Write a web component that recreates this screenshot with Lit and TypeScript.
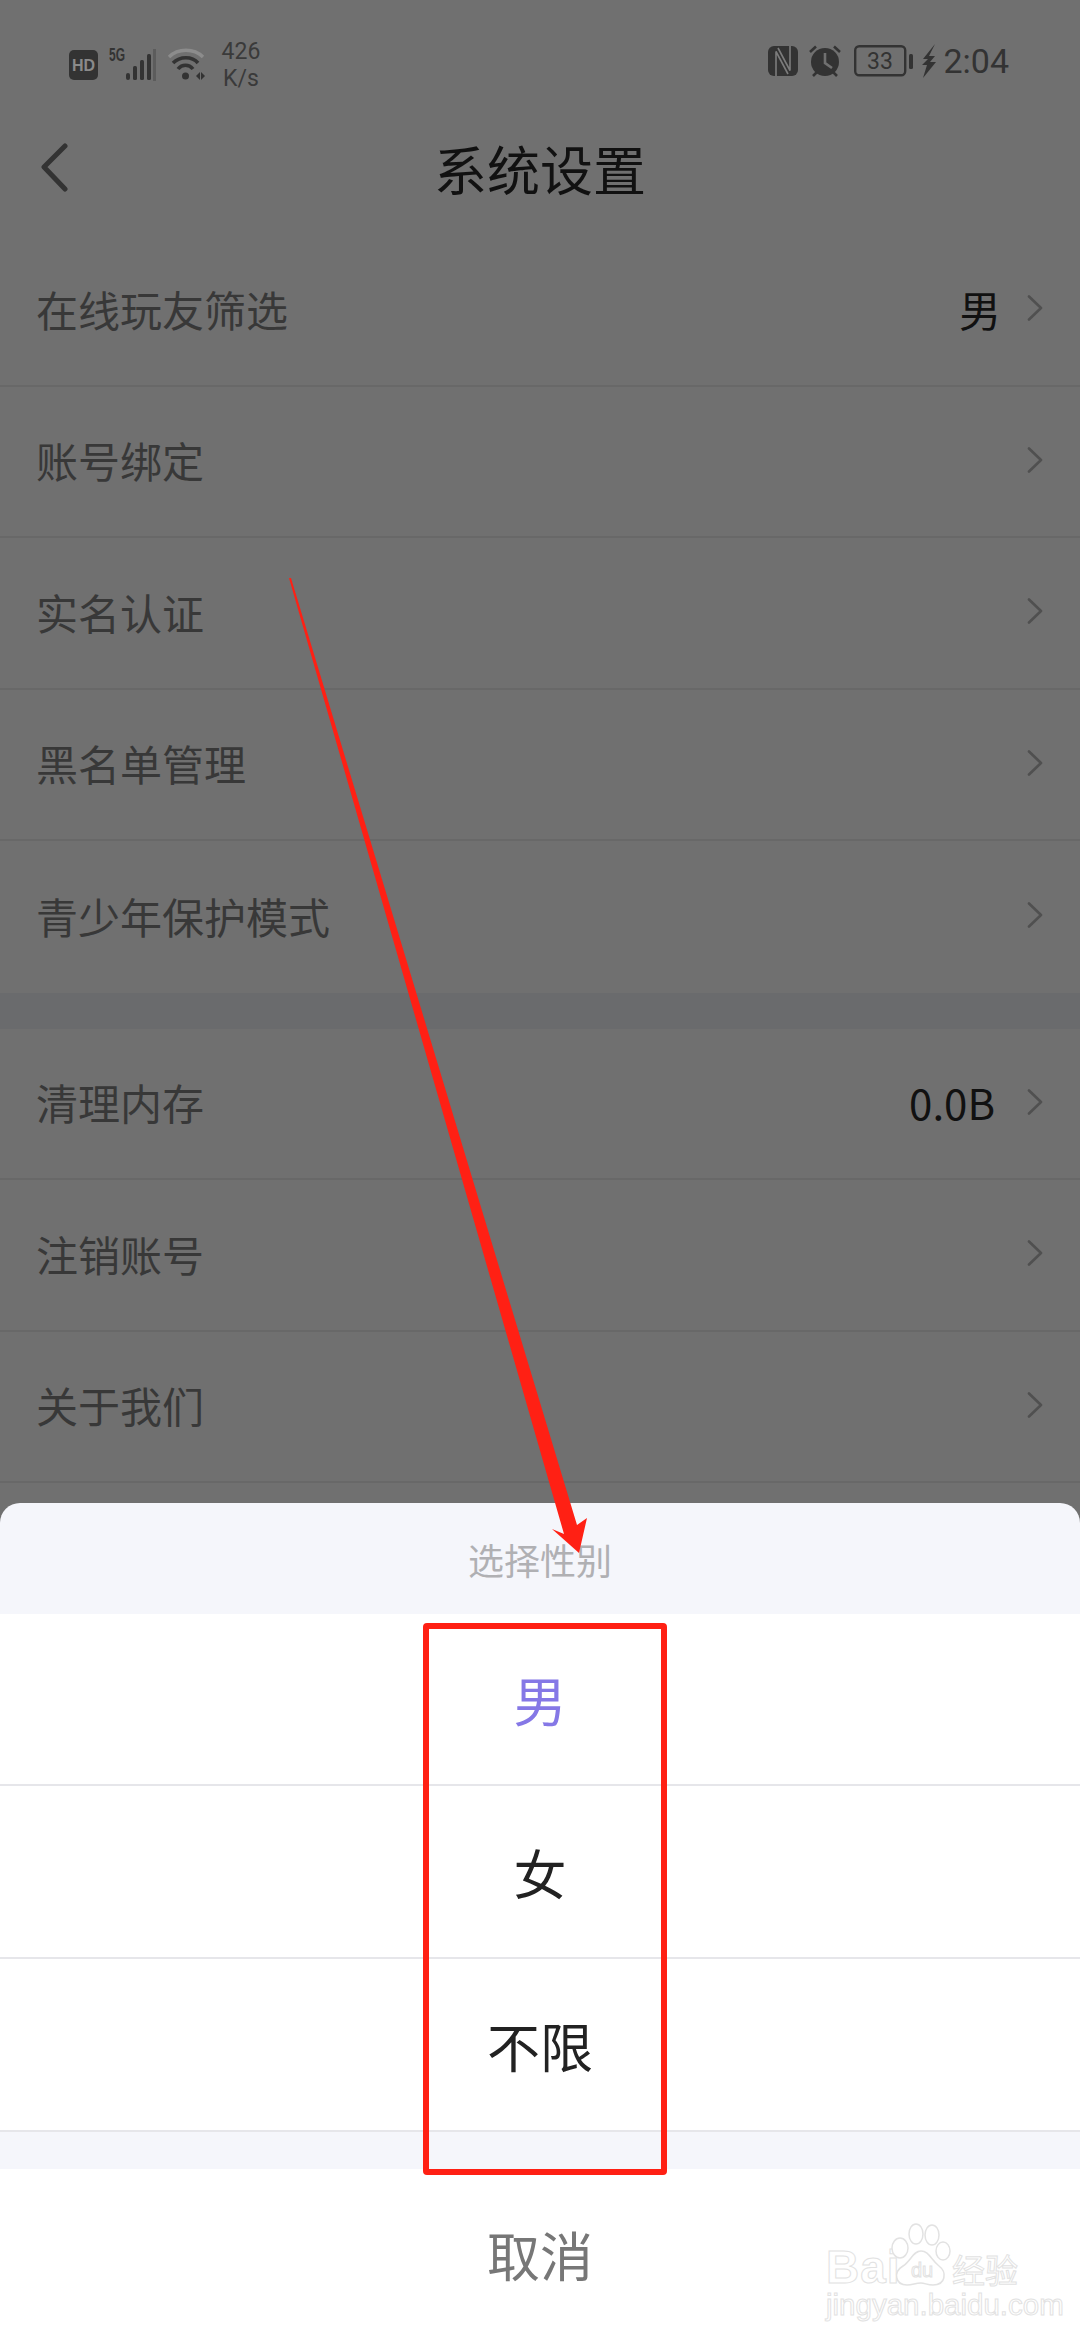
import { LitElement, html, css } from "lit";
import { customElement } from "lit/decorators.js";

const chevron = html`<svg class="chev" viewBox="0 0 16 26"><path d="M2 1.5 14 13 2 24.5" fill="none" stroke="#505050" stroke-width="2.6" stroke-linecap="round" stroke-linejoin="round"/></svg>`;

const topRows: [string, string?][] = [
  ["在线玩友筛选", "男"],
  ["账号绑定"],
  ["实名认证"],
  ["黑名单管理"],
  ["青少年保护模式"],
];
const bottomRows: [string, string?][] = [
  ["清理内存", "0.0B"],
  ["注销账号"],
  ["关于我们"],
];

@customElement("app-root")
export class AppRoot extends LitElement {
  static styles = css`
    :host {
      display: block;
      width: 1080px;
      height: 2340px;
      position: relative;
      overflow: hidden;
      background: #707070;
      font-family: "Noto Sans CJK SC", "Noto Sans", sans-serif;
      color: #111;
    }
    .status {
      height: 119px;
      display: flex;
      align-items: flex-start;
      justify-content: space-between;
      padding: 38px 71px 0 69px;
      box-sizing: border-box;
      color: #333;
    }
    .st-left, .st-right { display: flex; align-items: center; }
    .st-left { gap: 11px; }
    .st-right { height: 44px; margin-top: 1px; }
    .speed {
      font: 23px/27px Roboto, sans-serif;
      text-align: center;
      color: #3a3a3a;
      margin-left: 5px;
      width: 40px;
    }
    .clock {
      font: 34px/44px Roboto, sans-serif;
      color: #333;
      margin-left: 7px;
    }
    .nav {
      height: 116px;
      padding-bottom: 18px;
      box-sizing: border-box;
      position: relative;
      display: flex;
      align-items: center;
      justify-content: center;
      font-size: 53px;
      line-height: 60px;
      color: #111;
    }
    .back { position: absolute; left: 41px; top: 24px; width: 28px; height: 50px; }
    .group { display: flex; flex-direction: column; }
    .row {
      height: 151.5px;
      box-sizing: border-box;
      border-bottom: 2px solid #686868;
      display: flex;
      align-items: center;
      padding: 0 37px 3px 36px;
      font-size: 42px;
      color: #383838;
    }
    .row.last { border-bottom: none; }
    .label { flex: 1; }
    .value { color: #111; margin-right: 26px; }
    .value.num { margin-right: 32px; }
    .chev { width: 16px; height: 26px; flex: none; }
    .gap { height: 36px; background: #6a6b6d; }

    .sheet {
      position: absolute;
      left: 0;
      right: 0;
      top: 1503px;
      bottom: 0;
      display: flex;
      flex-direction: column;
      background: #f5f6fb;
      border-radius: 20px 20px 0 0;
      overflow: hidden;
    }
    .sheet-title {
      height: 111px;
      display: flex;
      align-items: center;
      justify-content: center;
      font-size: 36px;
      color: #b0b0b3;
    }
    .opt {
      height: 173px;
      box-sizing: border-box;
      background: #fff;
      border-bottom: 2px solid #e6e6ea;
      display: flex;
      align-items: center;
      justify-content: center;
      font-size: 53px;
      color: #222;
    }
    .opt.sel { color: #8578e6; height: 172px; }
    .sheet-gap { height: 37px; }
    .cancel {
      flex: 1;
      background: #fff;
      display: flex;
      align-items: center;
      justify-content: center;
      font-size: 53px;
      color: #777;
      padding-bottom: 2px;
    }

    .redbox {
      position: absolute;
      left: 423px;
      top: 1623px;
      width: 244px;
      height: 552px;
      box-sizing: border-box;
      border: 6px solid #ff2014;
      border-radius: 4px;
    }
    .arrow { position: absolute; left: 0; top: 0; width: 1080px; height: 2340px; pointer-events: none; }

    .wm {
      position: absolute;
      left: 826px;
      top: 2222px;
      width: 200px;
      height: 98px;
      color: #fff;
      -webkit-text-stroke: 1px #e2e2e2;
      font-family: "Liberation Sans", "Noto Sans CJK SC", sans-serif;
    }
    .wm-bai { position: absolute; left: 0; top: 22px; font-size: 46px; line-height: 46px; font-weight: 700; letter-spacing: 1px; }
    .wm-paw { position: absolute; left: 65px; top: 0; width: 62px; height: 66px; }
    .wm-cn { position: absolute; left: 126px; top: 29px; font-size: 33px; line-height: 36px; font-family: "Noto Sans CJK SC", sans-serif; }
    .wm-url { position: absolute; left: 0; top: 67px; font-size: 29.5px; line-height: 32px; white-space: nowrap; }
  `;

  private rows(list: [string, string?][]) {
    return list.map(
      ([l, v], i) => html`<div class="row ${i === list.length - 1 && list.length === 5 ? "last" : ""}">
        <span class="label">${l}</span>
        ${v ? html`<span class="value ${v.length > 1 ? "num" : ""}">${v}</span>` : ""}
        ${chevron}
      </div>`
    );
  }

  render() {
    return html`
      <div class="status">
        <div class="st-left">
          <svg width="29" height="30" viewBox="0 0 29 30">
            <rect width="29" height="30" rx="5" fill="#333"/>
            <text x="14.5" y="21" font-family="Liberation Sans" font-weight="700" font-size="16" fill="#8a8a8a" text-anchor="middle">HD</text>
          </svg>
          <svg width="48" height="36" viewBox="0 0 48 36" style="margin-top:-2px">
            <text x="0" y="15" font-family="Liberation Sans Narrow, Liberation Sans" font-weight="700" font-size="18" fill="#333" textLength="16" lengthAdjust="spacingAndGlyphs">5G</text>
            <rect x="17" y="27" width="4" height="7" rx="2" fill="#333"/>
            <rect x="24" y="20" width="4" height="14" rx="1.5" fill="#333"/>
            <rect x="31" y="14" width="4" height="20" rx="1.5" fill="#333"/>
            <rect x="38" y="8" width="4" height="26" rx="1.5" fill="#333"/>
            <rect x="44" y="3" width="3" height="32" fill="#5c5c5c"/>
          </svg>
          <svg width="38" height="34" viewBox="0 0 38 34" style="margin-left:-1px">
            <path d="M2 9C11 0 27 0 36 9" fill="none" stroke="#8c8c8c" stroke-width="3.4"/>
            <path d="M6 15C13 8 25 8 31 15" fill="none" stroke="#333" stroke-width="3.6"/>
            <path d="M11 21C15 16 22 16 26 21" fill="none" stroke="#333" stroke-width="3.6"/>
            <circle cx="18.500" cy="28" r="3.500" fill="#333"/>
            <path d="M29 28 33 24V32ZM34 24 38 28 34 32Z" fill="#333"/>
          </svg>
          <div class="speed">426<br />K/s</div>
        </div>
        <div class="st-right">
          <svg width="30" height="30" viewBox="0 0 30 30">
            <rect width="30" height="30" rx="6" fill="#333"/>
            <path d="M8 30V5.500L20 28M22 0V24.500L10 2" fill="none" stroke="#7c7c7c" stroke-width="1.600"/>
          </svg>
          <svg width="34" height="32" viewBox="0 0 34 32" style="margin-left:10px">
            <circle cx="17" cy="17" r="14" fill="#333"/>
            <path d="M17 8V18L24 23" fill="none" stroke="#707070" stroke-width="2.600"/>
            <path d="M2 7 8 1.500M32 7 26 1.500M5 31 9 27M29 31 25 27" stroke="#333" stroke-width="2.600" fill="none"/>
          </svg>
          <svg width="60" height="32" viewBox="0 0 60 32" style="margin-left:12px">
            <rect x="1.200" y="1.200" width="50" height="29" rx="4" fill="none" stroke="#333" stroke-width="2.400"/>
            <text x="26" y="24" font-family="Roboto" font-size="23" fill="#333" text-anchor="middle">33</text>
            <rect x="55" y="9" width="4" height="15" rx="1.500" fill="#333"/>
          </svg>
          <svg width="14" height="34" viewBox="0 0 14 34" style="margin-left:8px">
            <path d="M13 0 1 15H6L0 21H5L1 34 14 18H8L13 12H7Z" fill="#333"/>
          </svg>
          <span class="clock">2:04</span>
        </div>
      </div>

      <div class="nav">
        <svg class="back" viewBox="0 0 28 50"><path d="M24 3 3 24 24 46" fill="none" stroke="#333" stroke-width="5" stroke-linecap="round" stroke-linejoin="round"/></svg>
        系统设置
      </div>

      <div class="group">${this.rows(topRows)}</div>
      <div class="gap"></div>
      <div class="group">${this.rows(bottomRows)}</div>

      <div class="sheet">
        <div class="sheet-title">选择性别</div>
        <div class="opt sel">男</div>
        <div class="opt">女</div>
        <div class="opt">不限</div>
        <div class="sheet-gap"></div>
        <div class="cancel">取消</div>
      </div>

      <div class="wm">
        <span class="wm-bai">Bai</span>
        <svg class="wm-paw" viewBox="0 0 62 66">
          <g fill="#fff" stroke="#e2e2e2" stroke-width="1.500">
            <ellipse cx="9" cy="26" rx="8" ry="10"/>
            <ellipse cx="25" cy="12" rx="7" ry="10"/>
            <ellipse cx="41" cy="13" rx="7" ry="10"/>
            <ellipse cx="52" cy="29" rx="7" ry="9"/>
            <path d="M30 29C38 29 40 38 48 44C56 50 55 63 42 63C36 63 34 61 30 61C24 61 22 63 16 63C4 63 2 50 12 44C20 39 22 29 30 29Z"/>
          </g>
          <text x="31" y="55" font-family="Liberation Sans" font-size="20" text-anchor="middle" fill="#fff" stroke="#e2e2e2" stroke-width="1">du</text>
        </svg>
        <span class="wm-cn">经验</span>
        <span class="wm-url">jingyan.baidu.com</span>
      </div>

      <svg class="arrow" viewBox="0 0 1080 2340">
        <polygon points="289,578 291,578 577,1525 587,1518 579,1553 552,1529 564,1534" fill="#ff2014"/>
      </svg>
      <div class="redbox"></div>
    `;
  }
}
